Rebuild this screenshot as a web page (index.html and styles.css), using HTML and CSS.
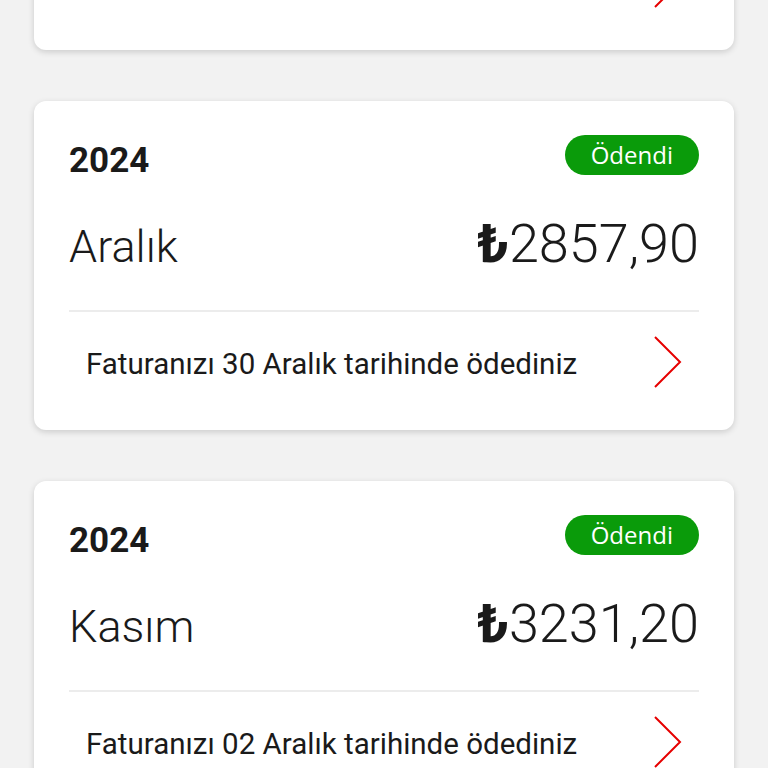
FILE: index.html
```html
<!DOCTYPE html>
<html lang="tr">
<head>
  <meta charset="UTF-8" />
  <meta name="viewport" content="width=device-width, initial-scale=1.0" />
  <title>Faturalarım</title>
  <link rel="stylesheet" href="styles.css">
</head>
<body>
  <div class="bills">
    <!-- Previous bill, scrolled mostly out of view -->
    <a href="#ocak" class="bill">
      <div class="bill-head">
        <div class="year">2025</div>
        <div class="badge">Ödendi</div>
      </div>
      <div class="bill-main">
        <div class="month">Ocak</div>
        <div class="amount"><span class="lira">₺</span>2911,40</div>
      </div>
      <div class="bill-foot">
        <span>Faturanızı 28 Ocak tarihinde ödediniz</span>
        <svg class="chevron" width="28" height="52" viewBox="0 0 28 52"><polyline points="1,1 26,26 1,51" /></svg>
      </div>
    </a>

    <a href="#aralik" class="bill">
      <div class="bill-head">
        <div class="year">2024</div>
        <div class="badge">Ödendi</div>
      </div>
      <div class="bill-main">
        <div class="month">Aralık</div>
        <div class="amount"><span class="lira">₺</span>2857,90</div>
      </div>
      <div class="bill-foot">
        <span>Faturanızı 30 Aralık tarihinde ödediniz</span>
        <svg class="chevron" width="28" height="52" viewBox="0 0 28 52"><polyline points="1,1 26,26 1,51" /></svg>
      </div>
    </a>

    <a href="#kasim" class="bill">
      <div class="bill-head">
        <div class="year">2024</div>
        <div class="badge">Ödendi</div>
      </div>
      <div class="bill-main">
        <div class="month">Kasım</div>
        <div class="amount"><span class="lira">₺</span>3231,20</div>
      </div>
      <div class="bill-foot">
        <span>Faturanızı 02 Aralık tarihinde ödediniz</span>
        <svg class="chevron" width="28" height="52" viewBox="0 0 28 52"><polyline points="1,1 26,26 1,51" /></svg>
      </div>
    </a>
  </div>
</body>
</html>
```
FILE: styles.css
```css
body {
  margin: 0;
  background-color: #f2f2f2;
  font-family: Roboto, "Open Sans", sans-serif;
  color: #1a1a1a;
}

.bills {
  display: flex;
  flex-direction: column;
  gap: 51px;
  padding: 0 34px 40px;
  margin-top: -279px; /* page is scrolled */
}

.bill {
  display: block;
  background: #fff;
  border-radius: 12px;
  box-shadow: 0 2px 6px rgba(0, 0, 0, 0.16);
  padding: 34px 35px 0 35px;
  text-decoration: none;
  color: inherit;
}

.bill-head {
  display: flex;
  justify-content: space-between;
  align-items: center;
  height: 40px;
}

.year {
  font-size: 35px;
  font-weight: 700;
  line-height: 1;
  padding-top: 10px;
}

.badge {
  background: #0a9b0a;
  color: #fff;
  font-family: "Open Sans", sans-serif;
  font-size: 24px;
  font-weight: 400;
  height: 40px;
  line-height: 39px;
  padding: 0 26px;
  border-radius: 20px;
}

.bill-main {
  display: flex;
  justify-content: space-between;
  align-items: baseline;
  height: 135px;
  line-height: 1;
  padding-top: 42px;
  box-sizing: border-box;
}

.month {
  font-size: 45px;
  font-weight: 300;
}

.amount {
  font-size: 54px;
  font-weight: 300;
}

.lira {
  font-weight: 700;
}

.bill-foot {
  display: flex;
  justify-content: space-between;
  align-items: center;
  height: 100px;
  padding: 0 17px 18px 17px;
  border-top: 2px solid #ececec;
  font-size: 29.5px;
  font-weight: 400;
  line-height: 1;
}

.bill-foot span {
  padding-top: 5px;
}

.chevron {
  fill: none;
  stroke: #e60000;
  stroke-width: 2;
}
```
